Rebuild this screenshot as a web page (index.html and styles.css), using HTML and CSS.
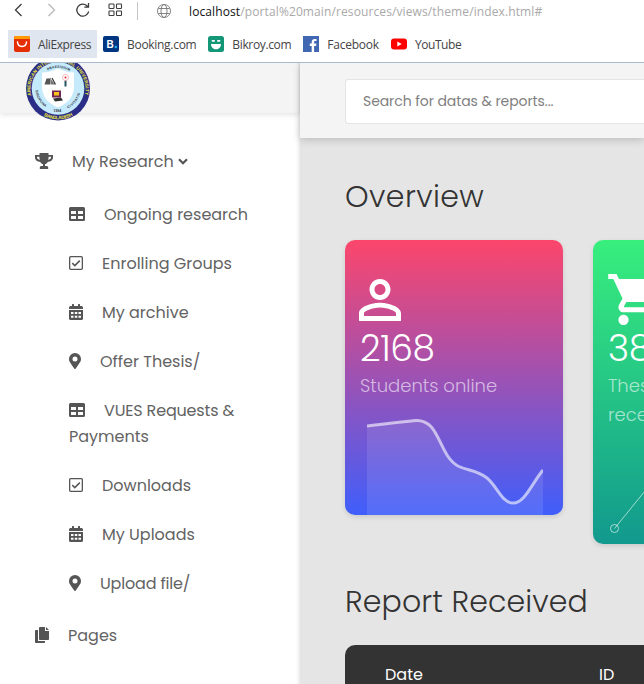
FILE: index.html
```html
<!DOCTYPE html>
<html lang="en">
<head>
<meta charset="utf-8">
<title>Research portal</title>
<link rel="stylesheet" href="styles.css">
</head>
<body>
<svg class="defs" width="0" height="0" aria-hidden="true">
  <symbol id="table" viewBox="0 0 16 14"><path fill-rule="evenodd" d="M1.5 0h13A1.5 1.5 0 0 1 16 1.500v11a1.500 1.500 0 0 1-1.500 1.500h-13A1.500 1.500 0 0 1 0 12.500v-11A1.500 1.500 0 0 1 1.500 0zM2 4v3h5V4zm7 0v3h5V4zM2 9v3h5V9zm7 0v3h5V9z"/></symbol>
  <symbol id="check" viewBox="0 0 14 14"><rect x=".65" y=".65" width="12.700" height="12.700" rx="1" fill="none" stroke="currentColor" stroke-width="1.300"/><path d="M3.300 7.100l2.500 2.500 5-5" fill="none" stroke="currentColor" stroke-width="1.500"/></symbol>
  <symbol id="calendar" viewBox="0 0 14 16"><path fill-rule="evenodd" d="M0 5V3.500A1.500 1.500 0 0 1 1.500 2H3V.4Q3 0 3.400 0h1.200Q5 0 5 .4V2h4V.4Q9 0 9.400 0h1.200q.4 0 .4.400V2h1.500A1.500 1.500 0 0 1 14 3.500V5zM0 6h14v8.500a1.500 1.500 0 0 1-1.500 1.500h-11A1.500 1.500 0 0 1 0 14.500zM2 8v2h2.500V8zm3.800 0v2h2.500V8zm3.700 0v2H12V8zM2 11.800v2h2.500v-2zm3.800 0v2h2.500v-2zm3.700 0v2H12v-2z"/></symbol>
  <symbol id="pin" viewBox="0 0 12 16"><path fill-rule="evenodd" d="M5.400 15.700C.8 9.100 0 8.400 0 6a6 6 0 0 1 12 0c0 2.400-.8 3.100-5.400 9.700a.75.75 0 0 1-1.200 0zM6 8.500a2.500 2.500 0 1 0 0-5 2.500 2.500 0 0 0 0 5z"/></symbol>
</svg>

<header class="browser">
  <div class="toolbar">
    <svg class="nav-icon" viewBox="0 0 16 16"><path d="M10.500 2L4.500 8l6 6"/></svg>
    <svg class="nav-icon dim" viewBox="0 0 16 16"><path d="M5.500 2l6 6-6 6"/></svg>
    <svg class="nav-icon" viewBox="0 0 16 16"><path d="M13.700 9.300A6 6 0 1 1 12.600 4.500M13.500 1v4.200H9.300"/></svg>
    <svg class="nav-icon tiles" viewBox="0 0 16 16"><rect x="2" y="2" width="5" height="4.500" rx=".8"/><rect x="9.500" y="2" width="5" height="4.500" rx=".8"/><rect x="2" y="9" width="5" height="4.500" rx=".8"/><rect x="9.500" y="9" width="5" height="4.500" rx=".8"/></svg>
    <span class="divider"></span>
    <svg class="nav-icon globe" viewBox="0 0 16 16"><circle cx="8" cy="8" r="6.500"/><ellipse cx="8" cy="8" rx="3" ry="6.500"/><path d="M2.300 5.500h11.400M2.300 10.500h11.400"/></svg>
    <div class="url"><span class="host">localhost</span>/portal%20main/resources/views/theme/index.html#</div>
  </div>
  <nav class="bookmarks">
    <a class="mark active"><svg viewBox="0 0 16 16"><rect width="16" height="16" rx="2" fill="#e62e04"/><path d="M0 3V2a2 2 0 0 1 2-2h12a2 2 0 0 1 2 2v1z" fill="#ff9a00"/><path d="M3.500 6c.5 6 8.500 6 9 0" fill="none" stroke="#fff" stroke-width="1.500" stroke-linecap="round"/></svg><span class="m1">AliExpress</span></a>
    <a class="mark"><svg viewBox="0 0 16 16"><rect width="16" height="16" rx="2" fill="#003580"/><text x="3.600" y="12" class="bk">B</text><circle cx="12.800" cy="11" r="1.200" fill="#1fb6ff"/></svg><span class="m2">Booking.com</span></a>
    <a class="mark"><svg viewBox="0 0 16 16"><rect width="16" height="16" rx="2.500" fill="#149777"/><path d="M3 8h10c0 7-10 7-10 0z" fill="#fff"/><path d="M4.500 4.800h1.600M9.900 4.800h1.600" stroke="#fff" stroke-width="1.700" stroke-linecap="round"/></svg><span class="m3">Bikroy.com</span></a>
    <a class="mark"><svg viewBox="0 0 16 16"><rect width="16" height="16" fill="#4267b2"/><path d="M8.700 16v-6H6.800V7.600h1.900V6c0-2.100 1.200-3.100 3.100-3.100h1.700v2.200h-1.200c-1 0-1.200.5-1.200 1.200v1.300h2.300l-.3 2.400h-2v6z" fill="#fff"/></svg><span class="m4">Facebook</span></a>
    <a class="mark"><svg viewBox="0 0 16 16"><rect y="2.500" width="16" height="11" rx="3" fill="#f00"/><path d="M6.300 5.600v4.800L10.700 8z" fill="#fff"/></svg><span class="m5">YouTube</span></a>
  </nav>
</header>

<div class="app">
  <aside class="sidebar">
    <div class="brand">
      <svg class="seal" viewBox="0 0 66 66">
        <defs>
          <path id="arcTop" d="M6.200 40A27.500 27.500 0 1 1 59.800 40"/>
          <path id="arcBottom" d="M13 56.500A31 31 0 0 0 53 56.500"/>
          <path id="arcInner" d="M20 16.500Q33 8 46 16.500"/>
          <path id="arcLeft" d="M10.500 35Q12 47 23 53"/>
          <path id="arcRight" d="M43 53Q54 47 55.500 35"/>
        </defs>
        <circle cx="33" cy="33" r="32" fill="#2b2e86"/>
        <circle cx="33" cy="33" r="26.300" fill="#c5eafb"/>
        <path d="M17 17q8 0 16-4 8 4 16 4v14c0 11-7 17-16 21-9-4-16-10-16-21z" fill="#fff"/>
        <text class="ring"><textPath href="#arcTop" textLength="98">AMERICAN INTERNATIONAL UNIVERSITY</textPath></text>
        <text class="ring"><textPath href="#arcBottom" startOffset="7" textLength="30">BANGLADESH</textPath></text>
        <text class="motto"><textPath href="#arcInner" startOffset="3" textLength="23">PRAESIDIUM</textPath></text>
        <text class="motto"><textPath href="#arcLeft" textLength="20">DISCIPLINA</textPath></text>
        <text class="motto"><textPath href="#arcRight" textLength="20">CIVITATIS</textPath></text>
        <text class="motto" x="28.500" y="56.500">1994</text>
        <path d="M19.500 29l2-6h3l1-1v7z" fill="#555"/>
        <path d="M25.500 23l4.500 6h-4z" fill="#777"/><path d="M27 22.500l3.500 6.500" stroke="#333" stroke-width="1.200"/>
        <path d="M39.500 25h2v6h-2z" fill="#245564"/><circle cx="40.500" cy="22" r="3" fill="none" stroke="#f3a3ab" stroke-width=".8"/><circle cx="40.500" cy="22" r="1" fill="#d22"/>
        <path d="M27 35h9v7h-9z" fill="#722455"/><path d="M29 36.500h5v3.500h-5z" fill="#f4c31d"/><path d="M28 43l8-1 2 3-8 1z" fill="#333"/>
      </svg>
    </div>
    <ul class="menu">
      <li class="top"><svg class="w18" viewBox="0 0 18 16"><path fill-rule="evenodd" d="M4.500 0h9v2H18v2.500C18 7.200 15.300 8.700 12.700 9c-.8 1.400-1.700 2-2.700 2.300V13h1.500c1 0 1.700.6 1.700 1.500V16H4.800v-1.500c0-.9.700-1.500 1.700-1.500H8v-1.700C7 11 6.100 10.400 5.300 9 2.700 8.700 0 7.200 0 4.500V2h4.500zM2 3.800v.7c0 1.100 1.300 2 2.800 2.400-.3-.9-.4-1.800-.4-3.100zm14 0h-2.400c0 1.300-.1 2.200-.4 3.100 1.500-.4 2.800-1.300 2.800-2.400z"/></svg><span>My Research</span><svg class="caret" viewBox="0 0 10 7"><path d="M1 1.200l4 4 4-4" fill="none" stroke="currentColor" stroke-width="2.200"/></svg></li>
      <li class="sub"><svg class="w16"><use href="#table"/></svg><span>Ongoing research</span></li>
      <li class="sub"><svg class="w14"><use href="#check"/></svg><span>Enrolling Groups</span></li>
      <li class="sub"><svg class="w14 tall"><use href="#calendar"/></svg><span>My archive</span></li>
      <li class="sub"><svg class="w12"><use href="#pin"/></svg><span>Offer Thesis/</span></li>
      <li class="sub"><svg class="w16"><use href="#table"/></svg><span class="tight">VUES Requests &amp;</span><span class="second">Payments</span></li>
      <li class="sub"><svg class="w14"><use href="#check"/></svg><span>Downloads</span></li>
      <li class="sub"><svg class="w14 tall"><use href="#calendar"/></svg><span>My Uploads</span></li>
      <li class="sub"><svg class="w12"><use href="#pin"/></svg><span class="tight">Upload file/</span></li>
      <li class="top"><svg class="w14 tall" viewBox="0 0 14 16"><path d="M4.800 0H10v4h4v8.200q0 .8-.8.800H4.800Q4 13 4 12.200V.8Q4 0 4.800 0zM11 0l3 3h-3zM0 3.800Q0 3 .8 3H3v11h7v1.200q0 .8-.8.800H.8Q0 16 0 15.200z"/></svg><span>Pages</span></li>
    </ul>
  </aside>

  <div class="content">
    <div class="searchbar"><div class="search"><span>Search for datas &amp; reports...</span></div></div>
    <main>
      <h2 class="h-overview">Overview</h2>
      <div class="cards">
        <section class="card students">
          <svg class="person" viewBox="4 4 16 16"><path d="M12 5.900c1.160 0 2.100.94 2.100 2.100s-.94 2.100-2.100 2.100S9.900 9.160 9.900 8s.94-2.100 2.100-2.100m0 9c2.970 0 6.100 1.460 6.100 2.100v1.100H5.900V17c0-.64 3.130-2.100 6.100-2.100M12 4C9.790 4 8 5.790 8 8s1.790 4 4 4 4-1.790 4-4-1.790-4-4-4zm0 9c-2.670 0-8 1.340-8 4v3h16v-3c0-2.660-5.330-4-8-4z"/></svg>
          <div class="num">2168</div>
          <div class="label">Students online</div>
          <svg class="chart" viewBox="0 0 176 97"><path class="area" d="M0 8C18 5.500 34 4 48 2.500 73 0 71 37 91 48c10 5 19 4 29 12 10 8 15 25 26 25 12 0 19-20 30-33v45H0z"/><path class="line" d="M0 8C18 5.500 34 4 48 2.500 73 0 71 37 91 48c10 5 19 4 29 12 10 8 15 25 26 25 12 0 19-20 30-33"/></svg>
        </section>
        <section class="card thesis">
          <svg class="cart" viewBox="1 2 21 20"><path d="M7 18c-1.100 0-1.990.9-1.990 2S5.900 22 7 22s2-.9 2-2-.9-2-2-2zM1 2v2h2l3.600 7.590-1.350 2.450c-.16.280-.25.610-.25.960 0 1.100.9 2 2 2h12v-2H7.420c-.14 0-.25-.11-.25-.25l.03-.12.900-1.630h7.450c.75 0 1.410-.41 1.750-1.030l3.580-6.490A1 1 0 0 0 20 4H5.210l-.94-2H1zm16 16c-1.100 0-1.990.9-1.990 2s.89 2 1.990 2 2-.9 2-2-.9-2-2-2z"/></svg>
          <div class="num">388</div>
          <div class="label">Thesis<br>received</div>
          <svg class="spark" viewBox="0 0 60 80"><circle cx="6.500" cy="62.500" r="4"/><path d="M6.500 62.500L54 4"/></svg>
        </section>
      </div>
      <h2 class="h-report">Report Received</h2>
      <div class="table"><span>Date</span><span>ID</span></div>
    </main>
  </div>
</div>
</body>
</html>
```
FILE: styles.css
```css
* { box-sizing: border-box; }
body {
  margin: 0;
  width: 644px;
  height: 684px;
  overflow: hidden;
  background: #fff;
  font-family: Poppins, Inter, "Open Sans", sans-serif;
}
.defs { position: absolute; }
svg { display: block; flex: none; fill: currentColor; }

/* Browser bars */
.browser {
  height: 63px;
  border-bottom: 1px solid #a9bccb;
  font-family: "Open Sans", "Noto Sans", sans-serif;
  font-size: 12px;
  color: #444;
}
.toolbar { display: flex; align-items: center; height: 22px; padding-left: 11px; }
.nav-icon { width: 16px; height: 16px; margin-right: 16px; fill: none; stroke: #3c3c3c; stroke-width: 1.3; transform: translateY(-1px); }
.nav-icon.dim { stroke: #b8b8b8; }
.nav-icon.tiles { margin-right: 14px; stroke-width: 1.1; }
.nav-icon.globe { margin: 0 17px 0 18px; stroke: #777; stroke-width: .9; transform: none; }
.divider { width: 1px; height: 18px; background: #c4c4c4; }
.url { color: #a9a9a9; white-space: nowrap; letter-spacing: .11px; }
.host { color: #111; }
.bookmarks { display: flex; padding: 8px 0 0 8px; }
.mark { display: flex; align-items: center; height: 28px; padding: 0 6px; white-space: nowrap; }
.mark.active { background: #dfe6ef; }
.mark svg { width: 16px; height: 16px; margin-right: 8px; }
.m1 { letter-spacing: -.4px; }
.m2 { letter-spacing: -.3px; }
.m3 { letter-spacing: -.36px; }
.m4 { letter-spacing: -.22px; }
.m5 { letter-spacing: -.42px; }
.bk { font: bold 10px "Liberation Sans", sans-serif; fill: #fff; }

/* Page */
.app { display: flex; height: 621px; overflow: hidden; color: #555; }
.sidebar { width: 300px; flex: none; background: #fff; box-shadow: inset -4px 0 4px -3px rgba(0,0,0,.12); }
.brand {
  height: 50px;
  padding-left: 25px;
  background: #f4f4f4;
  box-shadow: 0 2px 5px rgba(0,0,0,.1), inset -3px 0 3px -2px rgba(0,0,0,.15);
}
.seal { width: 66px; height: 66px; transform: translateY(-7.5px); }
.ring { font: bold 4.800px "Liberation Sans", sans-serif; fill: #e9e23c; }
.motto { font: bold 3.400px "Liberation Sans", sans-serif; fill: #334; }

.menu { list-style: none; margin: 0; padding: 20px 0 0; font-size: 16px; line-height: 26px; white-space: nowrap; }
.menu li { display: flex; flex-wrap: wrap; align-items: center; }
.menu span { color: #636363; transform: translateY(1px); }
.menu svg { height: 14px; margin-right: 19px; }
.menu .tall, .menu .w12, .menu .w18 { height: 16px; }
.top { height: 56px; padding-left: 35px; }
.sub { padding: 11.500px 20px 11.500px 69px; }
.second { flex-basis: 100%; }
.tight { letter-spacing: -.18px; }
.w18 { width: 18px; }
.w16 { width: 16px; }
.w14 { width: 14px; }
.w12 { width: 12px; }
.menu .caret { width: 10px; height: 7px; margin: 0 0 0 4px; }

.content { flex: 1; min-width: 0; background: #e5e5e5; }
.searchbar { position: relative; height: 75px; padding: 16px 0 0 45px; background: #f4f4f4; box-shadow: 0 2px 8px rgba(0,0,0,.18); }
.search {
  display: flex;
  align-items: center;
  height: 45px;
  padding-left: 17px;
  border: 1px solid #e5e5e5;
  border-right: 0;
  border-radius: 3px 0 0 3px;
  background: #fff;
  color: #808080;
  font-size: 14px;
  line-height: 20px;
  letter-spacing: -.08px;
  white-space: nowrap;
}
.search span { margin-top: -1px; }
main { padding-left: 45px; }
h2 { margin: 0; color: #333; font-weight: 300; font-size: 30px; line-height: 36px; letter-spacing: .13px; white-space: nowrap; }
.h-overview { padding-top: 41px; height: 102px; letter-spacing: .4px; }
.cards { display: flex; align-items: flex-start; gap: 30px; height: 304px; }
.card { flex: none; width: 218px; padding-left: 15px; border-radius: 10px; color: #fff; overflow: hidden; box-shadow: 0 2px 5px rgba(0,0,0,.12); }
.students { height: 275px; background: linear-gradient(#fc466b, #3f5efb); }
.thesis { height: 304px; background: linear-gradient(#38ef7d, #11998e); }
.person { width: 42px; height: 42px; margin: 38.500px 0 0 -1px; }
.cart { width: 54px; height: 51px; margin: 34px 0 0 -.500px; }
.num { margin-top: 7px; font-size: 36px; font-weight: 300; line-height: 42px; letter-spacing: -.4px; }
.thesis .num { margin-top: 2.500px; }
.label { margin-top: 1.500px; color: rgba(255,255,255,.6); font-size: 18px; font-weight: 300; line-height: 29px; }
.students .label { margin-bottom: 18px; }
.chart { width: 176px; height: 97px; margin-left: 7px; }
.area { fill: rgba(255,255,255,.1); }
.line { fill: none; stroke: rgba(255,255,255,.6); stroke-width: 3; }
.spark { width: 60px; height: 80px; fill: none; stroke: rgba(255,255,255,.6); stroke-width: 1; margin-top: 37px; }
.h-report { padding-top: 40px; height: 101px; }
.table { display: grid; grid-template-columns: 214px 1fr; height: 60px; padding: 17px 0 0 40px; border-radius: 10px 0 0 0; background: #333; color: #fff; font-size: 16px; line-height: 26px; }
```
